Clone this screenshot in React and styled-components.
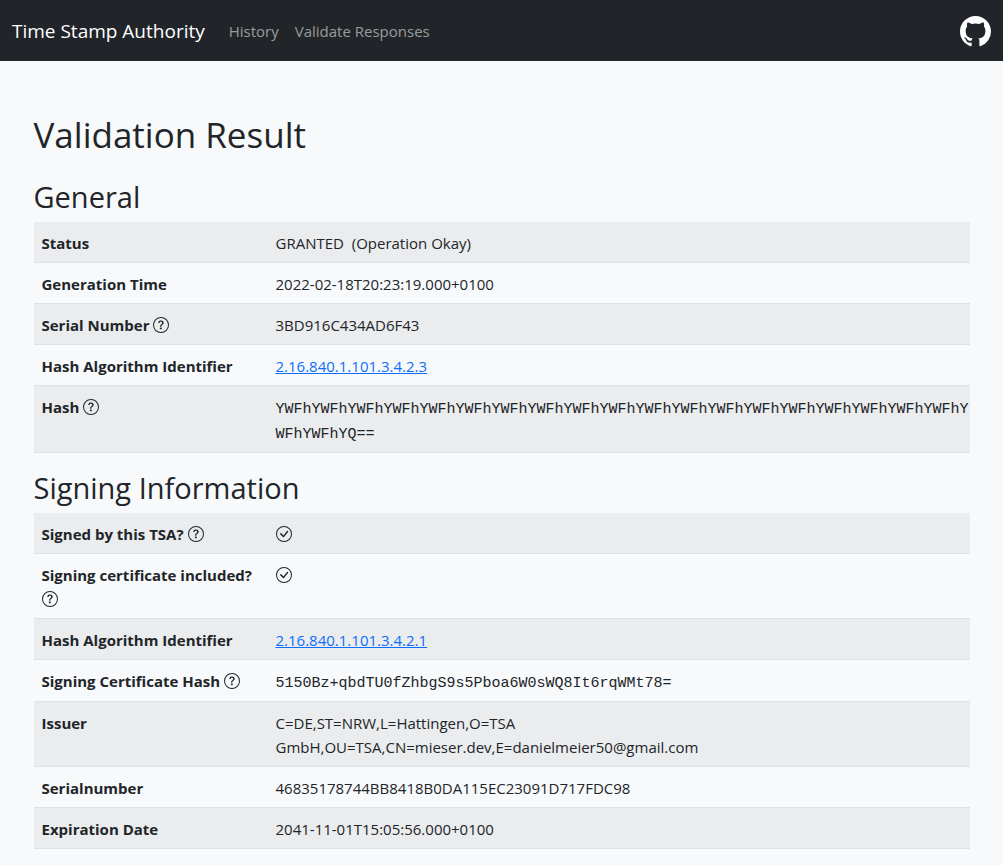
import React from "react";
import styled, { createGlobalStyle } from "styled-components";
import { BsCheckCircle, BsGithub, BsQuestionCircle } from "react-icons/bs";

const GlobalStyle = createGlobalStyle`
  *, *::before, *::after { box-sizing: border-box; }
  body {
    margin: 0;
    background: #f8f9fb;
    color: #212529;
    font-family: "Segoe UI", "Open Sans", "Noto Sans", sans-serif;
    font-size: 15px;
    line-height: 24px;
  }
`;

const Navbar = styled.header`
  display: flex;
  align-items: center;
  min-height: 61px;
  padding: 9px 12px 8px;
  background: #212529;
`;

const Brand = styled.a`
  margin-right: 16px;
  color: #fff;
  font-size: 19px;
  line-height: 30px;
  text-decoration: none;
  white-space: nowrap;
`;

const Nav = styled.nav`
  display: flex;
  flex: 1;
`;

const NavLink = styled.a`
  padding: 8px;
  color: rgba(255, 255, 255, 0.55);
  text-decoration: none;
  white-space: nowrap;
`;

const RepoLink = styled.a`
  display: flex;
  color: #fff;
  font-size: 31px;
`;

const Main = styled.main`
  max-width: 960px;
  margin: 0 auto;
  padding: 52px 12px 0;
`;

const Title = styled.h1`
  margin: 0 0 22px;
  font-size: 35px;
  font-weight: 400;
  line-height: 44px;
`;

const SectionTitle = styled.h2`
  margin: 0 0 7px;
  font-size: 29px;
  font-weight: 400;
  line-height: 36px;
`;

const Table = styled.table`
  width: 100%;
  margin-bottom: 17px;
  border-collapse: collapse;
  table-layout: fixed;
`;

const Row = styled.tr`
  border-bottom: 1px solid #dee2e6;
  vertical-align: top;

  &:nth-child(odd) {
    background: #ebecee;
  }
`;

const Label = styled.th`
  width: 25%;
  padding: 9px 8px 7px;
  font-weight: 700;
  text-align: left;
`;

const Value = styled.td`
  padding: 9px ${(p) => (p.$code ? "0" : "8px")} 7px 8px;
  line-height: ${(p) => (p.$code ? "25px" : "24px")};
  white-space: pre-wrap;
`;

const Code = styled.code`
  font-family: Consolas, "Liberation Mono", monospace;
  font-size: 15px;
  line-height: 20px;
  word-break: break-all;
`;

const Link = styled.a`
  color: #0d6efd;
  text-decoration: underline;
`;

const Icon = styled.span`
  display: inline-block;
  height: 16px;
  font-size: 16px;
  line-height: 16px;
  vertical-align: -2px;

  svg {
    display: block;
  }
`;

const general = [
  { label: "Status", value: "GRANTED  (Operation Okay)" },
  { label: "Generation Time", value: "2022-02-18T20:23:19.000+0100" },
  { label: "Serial Number", help: true, value: "3BD916C434AD6F43" },
  { label: "Hash Algorithm Identifier", value: "2.16.840.1.101.3.4.2.3", kind: "link" },
  { label: "Hash", help: true, value: "YWFh".repeat(21) + "YQ==", kind: "code" },
];

const signing = [
  { label: "Signed by this TSA?", help: true, kind: "check" },
  { label: "Signing certificate included?", help: true, kind: "check" },
  { label: "Hash Algorithm Identifier", value: "2.16.840.1.101.3.4.2.1", kind: "link" },
  {
    label: "Signing Certificate Hash",
    help: true,
    value: "5150Bz+qbdTU0fZhbgS9s5Pboa6W0sWQ8It6rqWMt78=",
    kind: "code",
  },
  {
    label: "Issuer",
    value: "C=DE,ST=NRW,L=Hattingen,O=TSA\nGmbH,OU=TSA,CN=mieser.dev,E=danielmeier50@gmail.com",
  },
  { label: "Serialnumber", value: "46835178744BB8418B0DA115EC23091D717FDC98" },
  { label: "Expiration Date", value: "2041-11-01T15:05:56.000+0100" },
];

function Content({ kind, value }) {
  if (kind === "link") return <Link href="#oid">{value}</Link>;
  if (kind === "code") return <Code>{value}</Code>;
  if (kind === "check")
    return (
      <Icon role="img" aria-label="Yes">
        <BsCheckCircle />
      </Icon>
    );
  return value;
}

function Section({ title, rows }) {
  return (
    <section>
      <SectionTitle>{title}</SectionTitle>
      <Table>
        <tbody>
          {rows.map((row) => (
            <Row key={row.label}>
              <Label scope="row">
                {row.label}
                {row.help && (
                  <>
                    {" "}
                    <Icon role="img" aria-label="Help">
                      <BsQuestionCircle />
                    </Icon>
                  </>
                )}
              </Label>
              <Value $code={row.kind === "code"}>
                <Content kind={row.kind} value={row.value} />
              </Value>
            </Row>
          ))}
        </tbody>
      </Table>
    </section>
  );
}

export default function App() {
  return (
    <>
      <GlobalStyle />
      <Navbar>
        <Brand href="#home">Time Stamp Authority</Brand>
        <Nav>
          <NavLink href="#history">History</NavLink>
          <NavLink href="#validate">Validate Responses</NavLink>
        </Nav>
        <RepoLink href="#github" aria-label="GitHub">
          <BsGithub />
        </RepoLink>
      </Navbar>
      <Main>
        <Title>Validation Result</Title>
        <Section title="General" rows={general} />
        <Section title="Signing Information" rows={signing} />
      </Main>
    </>
  );
}
